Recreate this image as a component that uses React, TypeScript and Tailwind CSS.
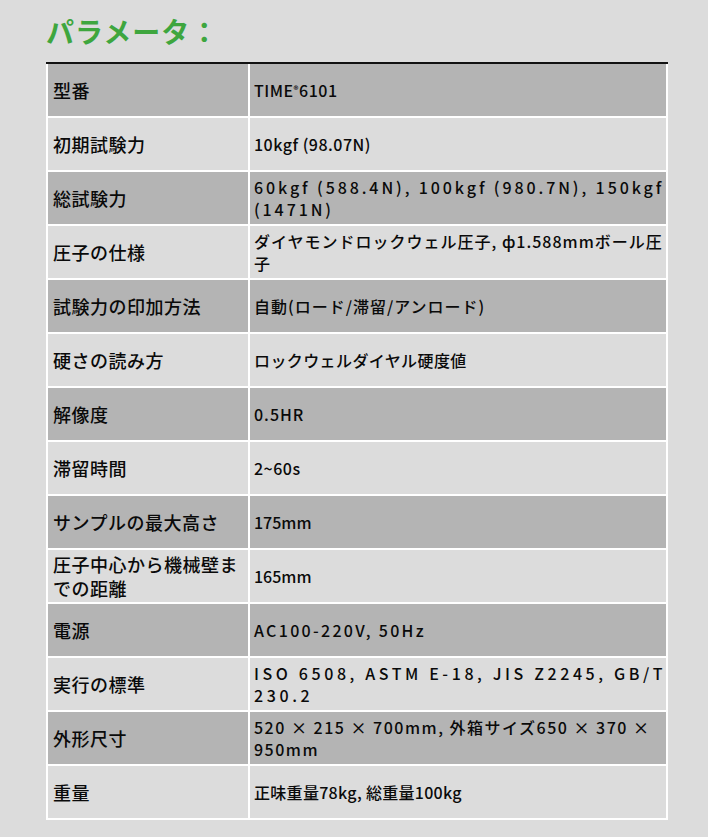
import React from 'react';

type Row = { label: React.ReactNode; value: React.ReactNode; track?: string };

const rows: Row[] = [
  {
    label: '型番',
    value: (
      <>
        TIME<sup className="relative -top-[3px] text-[10px]">®</sup>6101
      </>
    ),
    track: 'tracking-[0.5px]',
  },
  { label: '初期試験力', value: '10kgf (98.07N)', track: 'tracking-[0.5px]' },
  {
    label: '総試験力',
    value: (
      <>
        60kgf (588.4N), 100kgf (980.7N), 150kgf
        <br />
        (1471N)
      </>
    ),
    track: 'tracking-[2.9px]',
  },
  {
    label: '圧子の仕様',
    value: (
      <>
        ダイヤモンドロックウェル圧子, ф1.588mmボール圧
        <br />子
      </>
    ),
    track: 'tracking-[1px]',
  },
  { label: '試験力の印加方法', value: '自動(ロード/滞留/アンロード)', track: 'tracking-[1px]' },
  { label: '硬さの読み方', value: 'ロックウェルダイヤル硬度値', track: 'tracking-[0.4px]' },
  { label: '解像度', value: '0.5HR', track: 'tracking-[1px]' },
  { label: '滞留時間', value: '2~60s', track: 'tracking-[0.5px]' },
  { label: 'サンプルの最大高さ', value: '175mm' },
  {
    label: (
      <>
        圧子中心から機械壁ま
        <br />
        での距離
      </>
    ),
    value: '165mm',
  },
  { label: '電源', value: 'AC100-220V, 50Hz', track: 'tracking-[2.3px]' },
  {
    label: '実行の標準',
    value: (
      <>
        ISO 6508, ASTM E-18, JIS Z2245, GB/T
        <br />
        230.2
      </>
    ),
    track: 'tracking-[3.6px]',
  },
  {
    label: '外形尺寸',
    value: (
      <>
        520 × 215 × 700mm, 外箱サイズ650 × 370 ×
        <br />
        950mm
      </>
    ),
    track: 'tracking-[1.5px]',
  },
  { label: '重量', value: '正味重量78kg, 総重量100kg', track: 'tracking-[0.3px]' },
];

export default function App() {
  return (
    <div
      className="min-h-[837px] w-[708px] bg-[#dcdcdc] text-[#0a0a0a]"
      style={{ fontFamily: '"Noto Sans CJK JP", "Noto Sans", sans-serif' }}
    >
      <div className="pl-[46px] pt-[11px]">
        <h2 className="h-[51px] text-[28px] font-bold leading-[40px] tracking-[1px] text-[#3ea63e]">
          パラメータ：
        </h2>
        <div className="flex w-[622px] flex-col gap-[2px] border-t-2 border-[#111] bg-white px-[2px] pb-[2px]">
          {rows.map((row, i) => {
            const bg = i % 2 === 0 ? 'bg-[#b4b4b4]' : 'bg-[#dcdcdc]';
            return (
              <div key={i} className="grid h-[52px] grid-cols-[200px_1fr] gap-[2px]">
                <div className={`${bg} flex items-center px-[5px] text-[18px] font-medium leading-[24px] tracking-[0.5px]`}>
                  <span className="whitespace-nowrap">{row.label}</span>
                </div>
                <div className={`${bg} flex items-center overflow-hidden px-[4px] text-[16px] font-medium leading-[22px]`}>
                  <span className={`whitespace-nowrap ${row.track ?? ''}`}>{row.value}</span>
                </div>
              </div>
            );
          })}
        </div>
      </div>
    </div>
  );
}
